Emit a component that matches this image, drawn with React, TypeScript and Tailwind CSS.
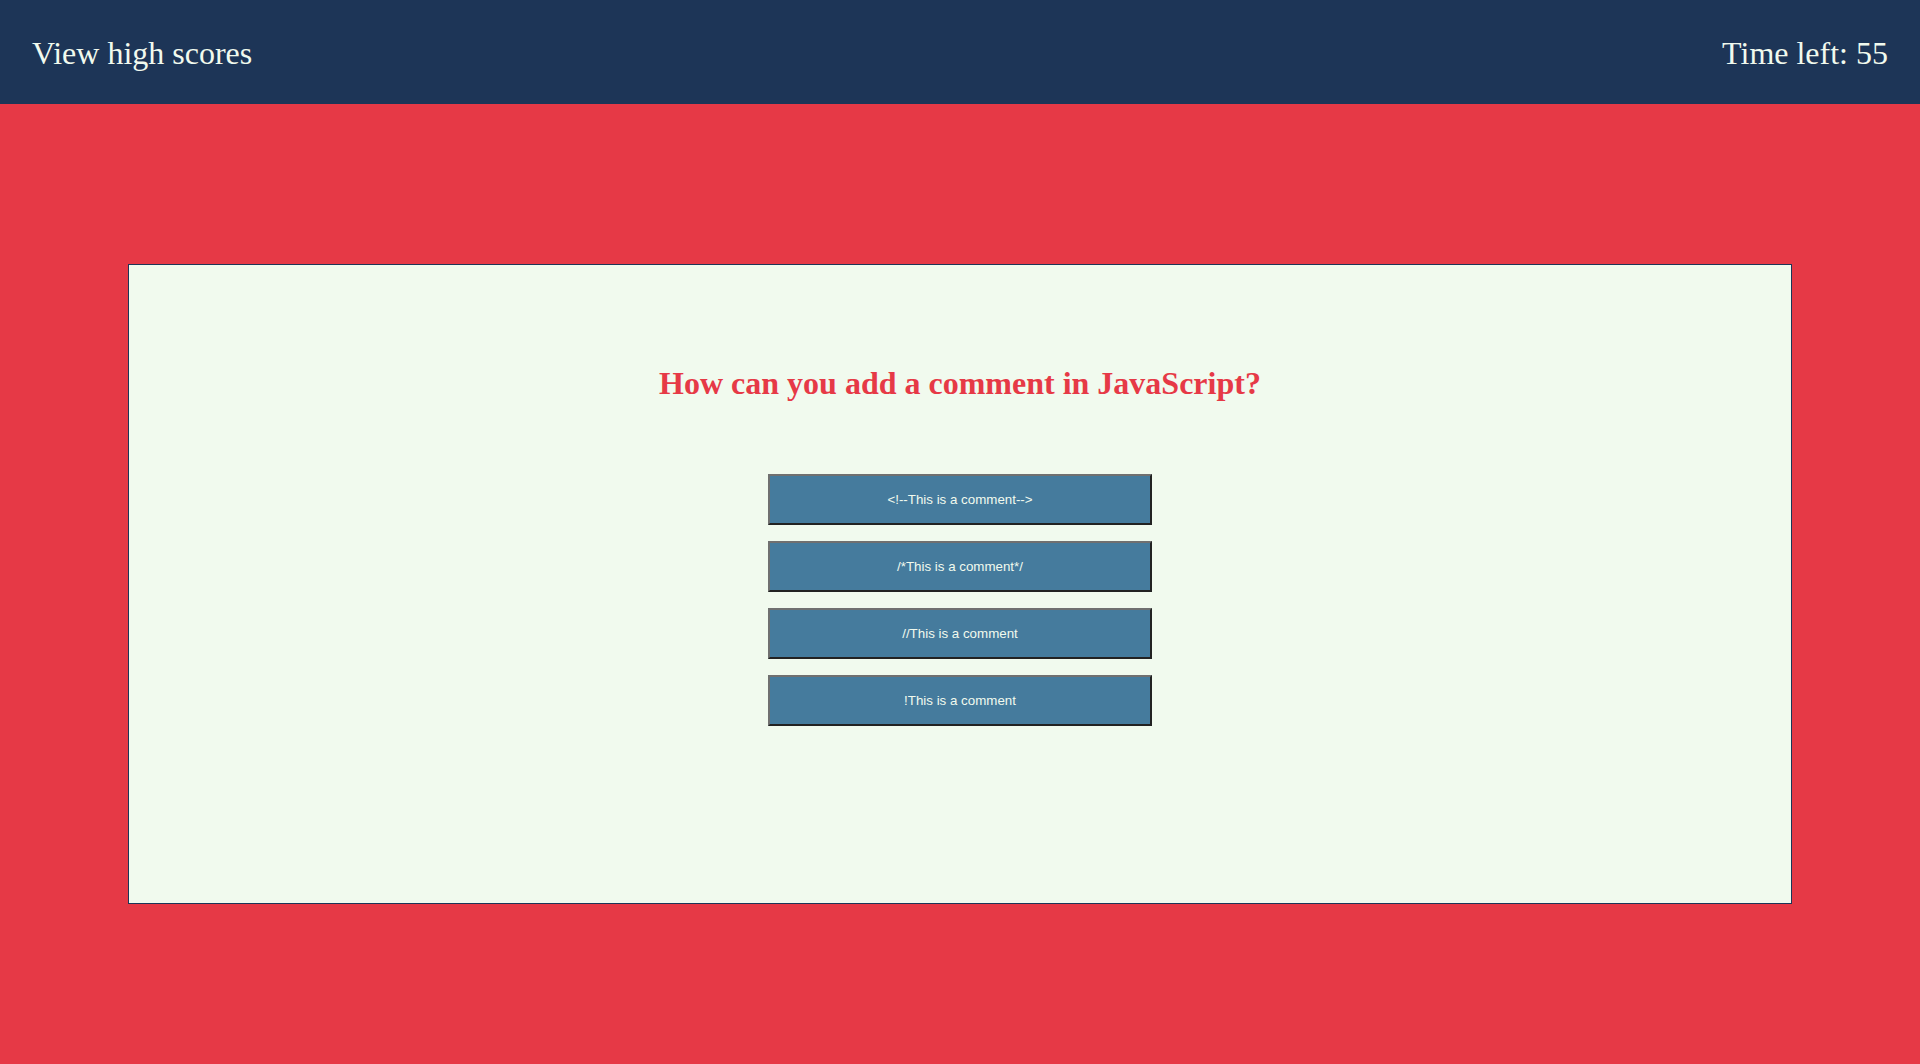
import React from "react";

export default function App() {
  const answers = [
    "<!--This is a comment-->",
    "/*This is a comment*/",
    "//This is a comment",
    "!This is a comment",
  ];
  return (
    <div className="w-[1920px] h-[1064px] bg-[#e63946] flex flex-col" style={{ fontFamily: '"Liberation Serif", serif' }}>
      <header className="h-[104px] bg-[#1d3557] flex items-center justify-between px-8 pt-[2px] text-[#f1faee] text-[32px] shrink-0">
        <span>View high scores</span>
        <span>Time left: 55</span>
      </header>
      <main className="mt-[160px] mx-[128px] h-[640px] bg-[#f1faee] border border-[#1d3557] flex flex-col items-center">
        <h2 className="mt-[100px] text-[32px] font-bold text-[#e63946] leading-[37px]">
          How can you add a comment in JavaScript?
        </h2>
        <div className="mt-[72px] flex flex-col gap-4">
          {answers.map((a) => (
            <button
              key={a}
              className="w-[384px] h-[51px] bg-[#457b9d] text-[#f1faee] text-[13.33px] border-2 border-t-[#707070] border-l-[#707070] border-b-[#222] border-r-[#222]"
              style={{ fontFamily: '"Liberation Sans", Arial, sans-serif' }}
            >
              {a}
            </button>
          ))}
        </div>
      </main>
    </div>
  );
}
